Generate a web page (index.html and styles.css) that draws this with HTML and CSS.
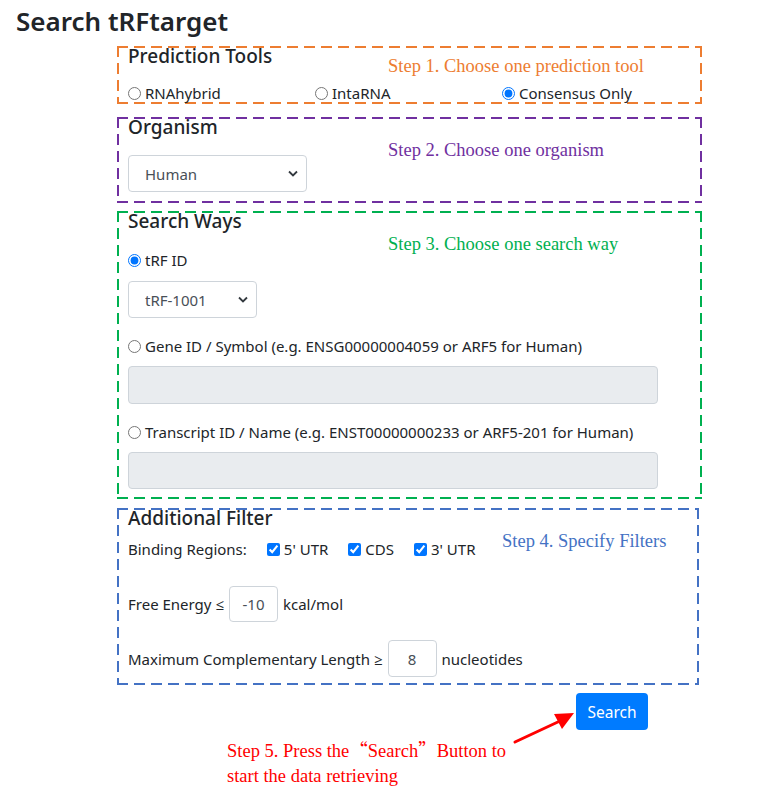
FILE: index.html
```html
<!DOCTYPE html>
<html lang="en">
<head>
<meta charset="utf-8">
<title>Search tRFtarget</title>
<link rel="stylesheet" href="styles.css">
</head>
<body>
<h1 class="title">Search tRFtarget</h1>
<form class="search-form">
  <div class="box box-tools">
    <div class="legend">Prediction Tools</div>
    <div class="tool-row">
      <label class="opt"><input type="radio" name="tool"> RNAhybrid</label>
      <label class="opt"><input type="radio" name="tool"> IntaRNA</label>
      <label class="opt"><input type="radio" name="tool" checked> Consensus Only</label>
    </div>
    <span class="step step1">Step 1. Choose one prediction tool</span>
  </div>

  <div class="box box-org">
    <div class="legend">Organism</div>
    <select class="sel sel-org"><option>Human</option></select>
    <span class="step step2">Step 2. Choose one organism</span>
  </div>

  <div class="box box-ways">
    <div class="legend">Search Ways</div>
    <label class="opt row-first"><input type="radio" name="way" checked> tRF ID</label>
    <select class="sel sel-trf"><option>tRF-1001</option></select>
    <label class="opt row-next"><input type="radio" name="way"> Gene ID / Symbol (e.g. ENSG00000004059 or ARF5 for Human)</label>
    <input class="wide-input" type="text" disabled>
    <label class="opt row-next"><input type="radio" name="way"> Transcript ID / Name (e.g. ENST00000000233 or ARF5-201 for Human)</label>
    <input class="wide-input wide-last" type="text" disabled>
    <span class="step step3">Step 3. Choose one search way</span>
  </div>

  <div class="box box-filter">
    <div class="legend">Additional Filter</div>
    <div class="bind-row">
      <span class="bind-label">Binding Regions:</span>
      <label class="chk"><input type="checkbox" checked> 5' UTR</label>
      <label class="chk"><input type="checkbox" checked> CDS</label>
      <label class="chk"><input type="checkbox" checked> 3' UTR</label>
    </div>
    <div class="num-row energy-row">
      <span>Free Energy ≤</span>
      <input class="num" type="text" value="-10">
      <span>kcal/mol</span>
    </div>
    <div class="num-row len-row">
      <span>Maximum Complementary Length ≥</span>
      <input class="num" type="text" value="8">
      <span>nucleotides</span>
    </div>
    <span class="step step4">Step 4. Specify Filters</span>
  </div>

  <button type="button" class="btn-search">Search</button>
</form>

<svg class="arrow" width="70" height="40" viewBox="0 0 70 40" aria-hidden="true">
  <line x1="3" y1="34" x2="48" y2="13" stroke="#ff0000" stroke-width="3" stroke-linecap="round"/>
  <polygon points="62,5 42,6 50,21" fill="#ff0000"/>
</svg>
<p class="step step5">Step 5. Press the<span class="q">“</span>Search<span class="q">”</span>Button to<br>start the data retrieving</p>
</body>
</html>
```

FILE: styles.css
```css
* { box-sizing: border-box; }

body {
  margin: 0;
  background: #fff;
  color: #212529;
  font-family: "Noto Sans", "Open Sans", sans-serif;
  font-size: 15px;
  position: relative;
  width: 781px;
  height: 800px;
}

.title {
  margin: 4px 0 0 16px;
  font-size: 26px;
  font-weight: 600;
  line-height: 34px;
  color: #212529;
}

.search-form {
  margin: 8px 0 0 117px;
  width: 585px;
}

/* dashed frame drawn with gradients: 11px dash, 6px gap, 2px thick */
.box {
  --c: #000;
  position: relative;
  padding: 2px 11px 2px;
  background-image:
    linear-gradient(90deg, var(--c) 11px, transparent 11px),
    linear-gradient(90deg, var(--c) 11px, transparent 11px),
    linear-gradient(180deg, var(--c) 11px, transparent 11px),
    linear-gradient(180deg, var(--c) 11px, transparent 11px);
  background-size: 17px 2px, 17px 2px, 2px 17px, 2px 17px;
  background-position: 0 0, 0 100%, 0 0, 100% 0;
  background-repeat: repeat-x, repeat-x, repeat-y, repeat-y;
}

.box-tools { --c: #ed7d31; }
.box-org { --c: #7030a0; margin-top: 13px; padding-bottom: 11px; }
.box-ways { --c: #00b050; margin-top: 8px; padding-bottom: 10px; }
.box-filter { --c: #4472c4; margin-top: 9px; padding-bottom: 8px; width: 582px; }

.legend {
  font-size: 19px;
  font-weight: 500;
  line-height: 16px;
  color: #212529;
}

.opt, .chk {
  display: flex;
  align-items: center;
  line-height: 18px;
  font-size: 15px;
  color: #212529;
  white-space: nowrap;
}

.opt input, .chk input {
  margin: 0 4px 0 0;
  width: 13px;
  height: 13px;
}

.tool-row {
  display: grid;
  grid-template-columns: 187px 187px 187px;
  margin-top: 20px;
}

.sel {
  display: block;
  appearance: none;
  -webkit-appearance: none;
  height: 37px;
  border: 1px solid #ced4da;
  border-radius: 4px;
  background: #fff url("data:image/svg+xml,%3Csvg xmlns='http://www.w3.org/2000/svg' width='10' height='7' viewBox='0 0 10 7'%3E%3Cpath d='M1 1.5l4 4 4-4' fill='none' stroke='%23343a40' stroke-width='1.8'/%3E%3C/svg%3E") no-repeat right 8px center;
  padding: 0 24px 0 16px;
  font-family: inherit;
  font-size: 15px;
  color: #495057;
}

.sel-org { margin-top: 20px; width: 179px; }
.sel-trf { margin-top: 12px; width: 129px; }

.row-first { margin-top: 22px; }
.row-next { margin-top: 19px; }

.wide-input {
  display: block;
  margin-top: 11px;
  width: 530px;
  height: 38px;
  border: 1px solid #ced4da;
  border-radius: 4px;
  background: #e9ecef;
}

.wide-last { height: 37px; }

.bind-row {
  display: flex;
  align-items: center;
  margin-top: 14px;
  line-height: 18px;
}

.bind-label { margin-right: 20px; }
.chk { margin-right: 20px; }

.num-row {
  display: flex;
  align-items: center;
  gap: 5px;
}

.energy-row { margin-top: 28px; }
.len-row { margin-top: 18px; }

.num {
  width: 49px;
  height: 36px;
  border: 1px solid #ced4da;
  border-radius: 4px;
  text-align: center;
  font-family: inherit;
  font-size: 15px;
  color: #495057;
  padding: 0;
}

.len-row .num { height: 37px; }

.btn-search {
  display: block;
  margin: 8px 0 0 459px;
  width: 72px;
  height: 37px;
  border: 0;
  border-radius: 4px;
  background: #007bff;
  color: #fff;
  font-family: inherit;
  font-size: 15.5px;
}

.step {
  position: absolute;
  font-family: "Liberation Serif", "Times New Roman", serif;
  font-size: 18.5px;
  line-height: 20px;
  white-space: nowrap;
}

.step .q {
  font-family: "Noto Sans CJK SC", "Liberation Serif", serif;
}

.step1 { color: #ed7d31; left: 271px; top: 10px; }
.step2 { color: #7030a0; left: 271px; top: 23px; }
.step3 { color: #00b050; left: 271px; top: 23px; }
.step4 { color: #4472c4; left: 385px; top: 23px; }

.step5 {
  margin: 0;
  color: #ff0000;
  left: 227px;
  top: 737px;
  line-height: 25px;
}

.arrow {
  position: absolute;
  left: 512px;
  top: 708px;
}
```
